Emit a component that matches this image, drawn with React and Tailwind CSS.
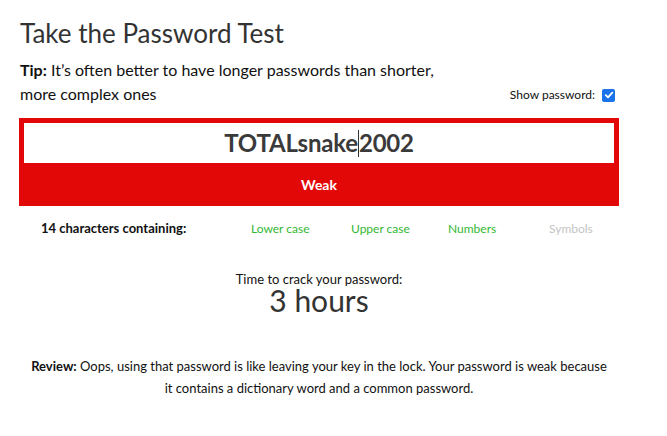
export default function App() {
  return (
    <div className="w-[667px] h-[436px] bg-white text-[#333] overflow-hidden" style={{ fontFamily: 'Lato, "Noto Sans", sans-serif' }}>
      <div className="w-[600px] ml-[19px] pt-[17px]">
        <h1 className="text-[26px] leading-[32px] font-normal text-[#333] pl-[1px]">Take the Password Test</h1>
        <div className="flex items-end justify-between mt-[9px]">
          <p className="text-[16px] leading-[24px] text-[#111] w-[430px] pl-[1px]">
            <span className="font-bold">Tip:</span> It’s often better to have longer passwords than shorter, more complex ones
          </p>
          <label className="flex items-center gap-[7px] text-[12px] text-[#111] mb-[2px] mr-[4px]">
            Show password:
            <span className="w-[13px] h-[13px] rounded-[2px] bg-[#1a73e8] flex items-center justify-center">
              <svg width="10" height="10" viewBox="0 0 10 10"><path d="M1.8 5.2 L4 7.3 L8.3 2.6" fill="none" stroke="white" strokeWidth="1.8" strokeLinecap="round" strokeLinejoin="round" /></svg>
            </span>
          </label>
        </div>
        <div className="mt-[12px] bg-[#e30808] p-[5px] pb-0">
          <div className="h-[40px] bg-white flex items-center justify-center text-[24px] font-bold text-[#3a3a3a] tracking-[-0.2px]">
            <span>TOTALsnake</span><span className="inline-block w-px h-[27px] bg-[#333]"></span><span>2002</span>
          </div>
          <div className="h-[43px] flex items-center justify-center text-white font-bold text-[14px]">Weak</div>
        </div>
        <div className="flex items-center mt-[13px] text-[12px]">
          <div className="w-[232px] pl-[22px] font-bold text-[13px] text-[#111]">14 characters containing:</div>
          <div className="w-[100px] text-[#33b833]">Lower case</div>
          <div className="w-[97px] text-[#33b833]">Upper case</div>
          <div className="w-[101px] text-[#33b833]">Numbers</div>
          <div className="text-[#c4c4c4]">Symbols</div>
        </div>
        <div className="mt-[32px] flex flex-col items-center text-[#111]">
          <div className="text-[13px] leading-[16px]">Time to crack your password:</div>
          <div className="text-[30px] leading-[26px] text-[#333] font-normal">3 hours</div>
        </div>
        <p className="mt-[42px] text-center text-[13px] leading-[22px] text-[#111] px-[8px]">
          <span className="font-bold">Review:</span> Oops, using that password is like leaving your key in the lock. Your password is weak because it contains a dictionary word and a common password.
        </p>
      </div>
    </div>
  );
}
